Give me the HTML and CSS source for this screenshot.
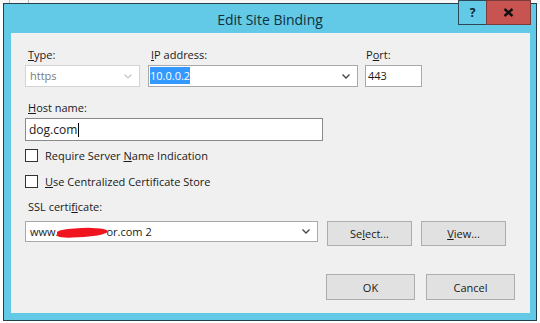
FILE: index.html
```html
<!DOCTYPE html>
<html lang="en">
<head>
  <meta charset="UTF-8">
  <title>Edit Site Binding</title>
  <link rel="stylesheet" href="styles.css">
</head>
<body>
  <div class="backdrop">
    <span class="bd-tab bd-left"></span>
    <span class="bd-tab bd-right"></span>
  </div>

  <div class="window">
    <div class="titlebar">
      <div class="title">Edit Site Binding</div>
      <div class="caption-btns">
        <div class="cap cap-help">?</div>
        <div class="cap cap-close">
          <svg width="11" height="9" viewBox="0 0 11 9">
            <path d="M1.5 1 L9.5 8 M9.5 1 L1.5 8" stroke="#111" stroke-width="2.4"/>
          </svg>
        </div>
      </div>
    </div>

    <div class="panel">
      <!-- Type / IP / Port -->
      <div class="top-row">
        <div class="field f-type">
          <label><u>T</u>ype:</label>
          <div class="combo disabled">
            <span class="combo-text">https</span>
            <svg class="chev" width="8" height="5" viewBox="0 0 8 5"><path d="M0.5 0.5 L4 4 L7.5 0.5" fill="none" stroke="#c4c4c4" stroke-width="1.2"/></svg>
          </div>
        </div>
        <div class="field f-ip">
          <label><u>I</u>P address:</label>
          <div class="combo">
            <span class="combo-text"><span class="selected">10.0.0.2</span></span>
            <svg class="chev" width="8" height="5" viewBox="0 0 8 5"><path d="M0.5 0.5 L4 4 L7.5 0.5" fill="none" stroke="#444" stroke-width="1.3"/></svg>
          </div>
        </div>
        <div class="field f-port">
          <label>P<u>o</u>rt:</label>
          <div class="textbox port-box">443</div>
        </div>
      </div>

      <div class="field f-host">
        <label><u>H</u>ost name:</label>
        <div class="textbox host-box"><span>dog.com</span><span class="caret"></span></div>
      </div>

      <div class="checks">
        <div class="check"><span class="box"></span><span>Require Server <u>N</u>ame Indication</span></div>
        <div class="check"><span class="box"></span><span><u>U</u>se Centralized Certificate Store</span></div>
      </div>

      <div class="field f-ssl">
        <label>SSL certi<u>f</u>icate:</label>
        <div class="ssl-row">
          <div class="combo ssl-combo">
            <span class="combo-text">www.<span class="scribble"></span>or.com 2</span>
            <svg class="chev" width="8" height="5" viewBox="0 0 8 5"><path d="M0.5 0.5 L4 4 L7.5 0.5" fill="none" stroke="#444" stroke-width="1.3"/></svg>
          </div>
          <div class="btn btn-small"><span>Se<u>l</u>ect...</span></div>
          <div class="btn btn-small"><span><u>V</u>iew...</span></div>
        </div>
      </div>

      <div class="footer">
        <div class="btn btn-wide">OK</div>
        <div class="btn btn-wide">Cancel</div>
      </div>
    </div>
  </div>
</body>
</html>
```

FILE: styles.css
```css
* {
  margin: 0;
  padding: 0;
  box-sizing: border-box;
}

body {
  font-family: 'Open Sans', 'Noto Sans', sans-serif;
  font-size: 11px;
  color: #1a1a1a;
  background: #fff;
  width: 540px;
  height: 323px;
  overflow: hidden;
  position: relative;
}

/* window behind the dialog */
.backdrop {
  position: absolute;
  top: 0;
  left: 0;
  width: 540px;
  height: 4px;
  background: #f7f7f7;
}

.bd-tab {
  position: absolute;
  top: 0;
  height: 4px;
  border-left: 1px solid #b9b9b9;
  border-right: 1px solid #b9b9b9;
}

.bd-left {
  left: 9px;
  width: 20px;
}

.bd-right {
  left: 500px;
  width: 20px;
  background: #dcdcdc;
}

/* dialog frame */
.window {
  position: relative;
  margin: 3px 0 0 3px;
  width: 534px;
  height: 318px;
  background: #62c9e7;
  border: 1px solid #24414d;
  display: flex;
  flex-direction: column;
}

.titlebar {
  height: 29px;
  display: flex;
  align-items: center;
  justify-content: center;
}

.title {
  font-size: 14px;
  color: #10303a;
  padding-top: 1px;
}

.caption-btns {
  position: absolute;
  top: -4px;
  right: 5px;
  display: flex;
}

.cap {
  height: 25px;
  display: flex;
  align-items: center;
  justify-content: center;
  border: 1px solid #2c4a56;
}

.cap-help {
  width: 28px;
  background: #62c9e7;
  font-weight: 700;
  font-size: 12px;
  color: #10232b;
  border-right: none;
}

.cap-close {
  width: 45px;
  background: #c85452;
  border-color: #7a3a38;
}

.panel {
  flex: 1;
  margin: 0 6px 7px 7px;
  background: #f0f0f0;
  padding: 14px 15px 0 14px;
  display: flex;
  flex-direction: column;
}

label {
  display: block;
  height: 16px;
  line-height: 16px;
  padding-left: 3px;
  margin-bottom: 2px;
}

.top-row {
  display: flex;
  gap: 8px;
}

.f-type { width: 115px; }
.f-ip { width: 210px; }
.f-port { width: 57px; margin-left: -1px; }
.f-port label { padding-left: 1px; }

.combo,
.textbox {
  height: 22px;
  background: #fff;
  border: 1px solid #a9a9a9;
  display: flex;
  align-items: center;
  padding: 0 4px;
  line-height: 18px;
}

.combo {
  justify-content: space-between;
}

.combo.disabled {
  border-color: #d3d3d3;
  color: #7a7a7a;
}

.chev {
  margin-right: 3px;
}

.selected {
  background: #3399ff;
  color: #fff;
  padding: 1px 0;
  margin-left: -3px;
}

.port-box {
  padding-left: 2px;
}

.f-host {
  margin-top: 13px;
}

.host-box {
  width: 298px;
  height: 23px;
  border-color: #8a8a8a;
  font-size: 12px;
  padding-left: 3px;
}

.caret {
  width: 1px;
  height: 14px;
  background: #000;
  margin-left: 1px;
}

.checks {
  margin-top: 6px;
  display: flex;
  flex-direction: column;
  gap: 10px;
}

.check {
  height: 16px;
  display: flex;
  align-items: center;
  gap: 7px;
}

.check .box {
  width: 13px;
  height: 13px;
  background: #fff;
  border: 1px solid #333;
}

.f-ssl {
  margin-top: 10px;
}

.f-ssl label {
  margin-bottom: 6px;
}

.ssl-row {
  display: flex;
  align-items: flex-start;
}

.ssl-combo {
  width: 293px;
  height: 21px;
}

.scribble {
  display: inline-block;
  width: 51px;
  height: 9px;
  margin: 0 -2px 0 -1px;
  background: #f0141e;
  border-radius: 40% 60% 55% 35%;
  vertical-align: -1px;
  transform: rotate(-3deg);
}

.btn {
  height: 25px;
  background: #e1e1e1;
  border: 1px solid #adadad;
  display: flex;
  align-items: center;
  justify-content: center;
}

.btn-small {
  width: 85px;
  margin-left: 9px;
}

.footer {
  margin-top: 28px;
  display: flex;
  justify-content: flex-end;
  gap: 11px;
}

.btn-wide {
  width: 89px;
  height: 26px;
}
```
